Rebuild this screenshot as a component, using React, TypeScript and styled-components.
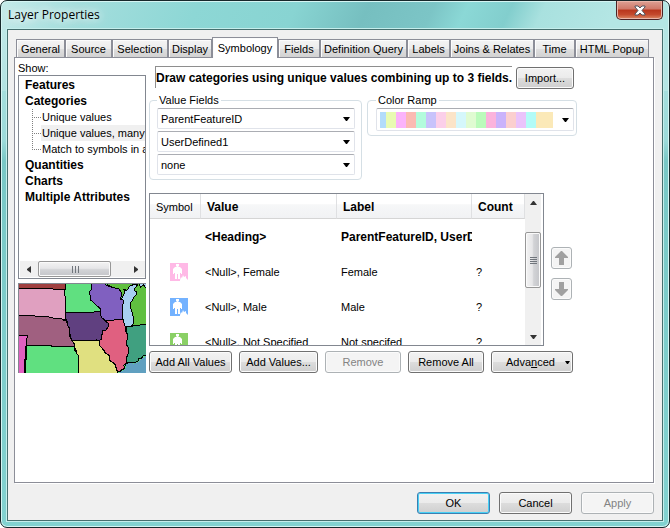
import React from "react";
import styled, { createGlobalStyle, css } from "styled-components";

const GlobalStyle = createGlobalStyle`
  *, *::before, *::after { box-sizing: border-box; }
  html, body, #root { height: 100%; margin: 0; }
  body { background: #fff; }
  body, button, select {
    font-family: "Liberation Sans", Arial, sans-serif;
    font-size: 11px;
    line-height: 16px;
    color: #000;
  }
`;

const heavy = css`
  font-size: 12px;
  font-weight: bold;
`;

const Frame = styled.main`
  display: flex;
  flex-direction: column;
  min-height: 100%;
  padding: 0 6px 6px;
  border: 1px solid #17282b;
  border-radius: 7px;
  box-shadow: inset 0 0 0 1px #d5f5f3;
  background:
    linear-gradient(115deg, #c5eae9 0, #a5dedd 70px, #8dd7d5 180px, #88d4d2 270px, #76bfc0 335px, #7cc5c6 395px, #8bd8d6 425px, #82cecd 465px, #a9e1df 495px, #b4e6e4 560px, #b4e6e4 100%) top / 100% 90px no-repeat,
    linear-gradient(#b4e6e4 0, #9cdad9 140px, #79c8c6 160px, #82d2d0 100%);
`;

const TitleBar = styled.header`
  display: flex;
  justify-content: space-between;
  align-items: flex-start;
  height: 28px;
`;

const Title = styled.h1`
  margin: 0;
  padding: 5px 2px 0 1px;
  font: 12px/18px "Open Sans", "Noto Sans", sans-serif;
  text-shadow: 0 0 8px #fff, 0 0 12px #fff;
`;

const CloseButton = styled.button`
  display: grid;
  place-items: center;
  width: 47px;
  height: 19px;
  padding: 0;
  border: 1px solid #4b2325;
  border-top: 0;
  border-radius: 0 0 5px 5px;
  box-shadow: inset 0 0 0 1px #e9b6aa;
  background: linear-gradient(#dda195 0, #cf7868 45%, #b8351c 50%, #c4492d 75%, #dc8a65 100%);
`;

const Client = styled.div`
  display: flex;
  flex: 1;
  flex-direction: column;
  padding: 7px 8px 6px 6px;
  border: 1px solid #46706f;
  box-shadow: 0 0 0 1px #c5eeec;
  background: #f0f0f0;
`;

const TabStrip = styled.nav`
  display: grid;
  grid-template-columns: 49px 47px 56px 44px 66px 42px 87px 43px 84px 41px 74px;
  align-items: end;
  height: 20px;
  padding-left: 2px;
`;

const Tab = styled.button<{ $active?: boolean }>`
  height: 18px;
  padding: 0;
  border: 1px solid #8c8e98;
  border-bottom: 0;
  background: linear-gradient(#f4f4f4 0, #ececec 50%, #dedede 55%, #d2d2d2 100%);
  box-shadow: inset 1px 1px #fcfcfc;
  white-space: nowrap;
  ${(p) =>
    p.$active &&
    css`
      height: 21px;
      margin-bottom: -1px;
      padding-bottom: 1px;
      background: #fff;
      z-index: 1;
    `}
`;

const Pane = styled.section`
  display: grid;
  flex: 1;
  grid-template-columns: 128px minmax(0, 1fr);
  column-gap: 3px;
  align-items: start;
  padding: 2px 76px 0 3px;
  border: 1px solid #8c8e98;
  box-shadow: 1px 1px #fff;
  background: #fff;
`;

const Sidebar = styled.div`
  display: flex;
  flex-direction: column;
`;

const ShowLabel = styled.span`
  height: 15px;
`;

const Tree = styled.div`
  display: flex;
  flex-direction: column;
  height: 204px;
  padding: 1px 0 1px 1px;
  border: 1px solid #828790;
`;

const TreeList = styled.ul`
  flex: 1;
  margin: 0;
  padding: 0;
  list-style: none;
  overflow: hidden;
`;

const TreeItem = styled.li`
  display: flex;
  height: 16px;
`;

const TreeButton = styled.button<{ $group?: boolean; $selected?: boolean }>`
  flex: 1;
  padding: 0 0 0 1px;
  border: 0;
  background: ${(p) => (p.$selected ? "#f0f0f0" : "transparent")};
  text-align: left;
  white-space: nowrap;
  ${(p) =>
    p.$group &&
    css`
      ${heavy}
      padding-left: 5px;
    `}
`;

const Branch = styled.svg`
  flex: none;
  width: 21px;
  height: 16px;
`;

const HScroll = styled.div`
  display: grid;
  grid-template-columns: 18px 73px 1fr 18px;
  height: 16px;
  background: #f0f0f0;
`;

const ScrollArrow = styled.button`
  display: grid;
  place-items: center;
  padding: 0;
  border: 0;
  background: transparent;
`;

const Thumb = styled.div<{ $vertical?: boolean }>`
  display: grid;
  place-items: center;
  border: 1px solid #979797;
  border-radius: 2px;
  box-shadow: inset 0 0 0 1px #fafafa;
  background: linear-gradient(${(p) => (p.$vertical ? "to right" : "to bottom")}, #f3f3f3 0, #e6e6e8 45%, #d2d3d6 55%, #c4c5c9 100%);
`;

const MapPreview = styled.svg`
  width: 128px;
  height: 90px;
  margin-top: 4px;
  border-top: 1px solid #828790;
  border-left: 1px solid #828790;
`;

const Content = styled.div`
  display: flex;
  flex-direction: column;
  padding-top: 6px;
`;

const Intro = styled.div`
  display: flex;
  gap: 4px;
  padding: 0 3px 0 6px;
`;

const IntroText = styled.p`
  ${heavy}
  flex: 1;
  min-width: 0;
  height: 22px;
  margin: 0;
  padding: 3px 0 0;
  border: solid #8e8e8e;
  border-width: 1px 0 0 1px;
  white-space: nowrap;
`;

const Button = styled.button<{ $primary?: boolean }>`
  display: flex;
  align-items: center;
  justify-content: center;
  height: 22px;
  padding: 0;
  border: 1px solid #707070;
  border-radius: 3px;
  box-shadow: inset 0 0 0 1px ${(p) => (p.$primary ? "#48d0f5" : "#fbfbfb")};
  background: linear-gradient(#f2f2f2 0, #ebebeb 49%, #dddddd 50%, #cfcfcf 100%);
  white-space: nowrap;
  ${(p) => p.$primary && "border-color: #3c7fb1;"}
  &:disabled {
    border-color: #adb2b5;
    background: #f4f4f4;
    color: #838383;
  }
`;

const ImportButton = styled(Button)`
  width: 58px;
  margin-top: 1px;
`;

const Groups = styled.div`
  display: grid;
  grid-template-columns: 213fr 210fr;
  column-gap: 5px;
  align-items: start;
  margin-top: 3px;
`;

const Group = styled.fieldset<{ $ramp?: boolean }>`
  display: flex;
  flex-direction: column;
  min-width: 0;
  margin: 0;
  padding: ${(p) => (p.$ramp ? "0 2px 4px 8px" : "0 6px 4px 7px")};
  border: 1px solid #d5dfe5;
  border-radius: 4px;
`;

const Legend = styled.legend`
  height: 16px;
  padding: 0 2px;
`;

const SelectWrap = styled.div`
  display: grid;
  grid-template-columns: 1fr 12px;
  align-items: center;
  height: 21px;
  margin-bottom: 2px;
  &:last-child { margin-bottom: 0; }
`;

const Select = styled.select`
  grid-area: 1 / 1 / 2 / 3;
  width: 100%;
  height: 21px;
  padding: 0 18px 0 3px;
  appearance: none;
  border: 1px solid #e0e3ea;
  border-top-color: #abadb3;
  border-radius: 2px;
  background: #fff;
`;

const SelectArrow = styled.svg`
  grid-area: 1 / 2;
  width: 7px;
  height: 4px;
  pointer-events: none;
`;

const RampButton = styled.button`
  display: flex;
  align-items: center;
  justify-content: space-between;
  height: 23px;
  padding: 0 4px 0 3px;
  border: 1px solid #e0e3ea;
  border-top-color: #abadb3;
  border-radius: 2px;
  background: #fff;
`;

const Ramp = styled.svg`
  width: 173px;
  height: 16px;
`;

const TableArea = styled.div`
  display: flex;
  align-items: center;
  gap: 7px;
  margin: 13px 5px 0 0;
`;

const ListBox = styled.div`
  display: flex;
  flex: 1;
  min-width: 0;
  height: 153px;
  padding-right: 2px;
  border: 1px solid #828790;
`;

const TableClip = styled.div`
  flex: 1;
  min-width: 0;
  height: 151px;
  overflow: hidden;
`;

const Table = styled.table`
  width: 100%;
  table-layout: fixed;
  border-collapse: separate;
  border-spacing: 0;
`;

const Th = styled.th<{ $heavy?: boolean }>`
  height: 25px;
  padding: 2px 0 0 6px;
  border-right: 1px solid #dfe0e2;
  border-bottom: 1px solid #d5d5d5;
  background: linear-gradient(#fff 0, #fff 40%, #f6f7f8 45%, #f1f2f4 100%);
  font-weight: normal;
  text-align: left;
  ${(p) => p.$heavy && heavy}
`;

const Td = styled.td<{ $heavy?: boolean }>`
  height: 35px;
  padding: 1px 0 0 4px;
  overflow: hidden;
  white-space: nowrap;
  ${(p) => p.$heavy && heavy}
`;

const IconCell = styled(Td)`
  padding-left: 20px;
`;

const Symbol = styled.svg`
  display: block;
  width: 18px;
  height: 18px;
`;

const VScroll = styled.div`
  display: grid;
  grid-template-rows: 38px 56px 1fr 17px;
  width: 16px;
  background: #f0f0f0;
`;

const VArrow = styled(ScrollArrow)`
  height: 18px;
`;

const MoveButtons = styled.div`
  display: grid;
  gap: 9px;
  padding-top: 8px;
`;

const MoveButton = styled(Button)`
  width: 21px;
`;

const Actions = styled.div`
  display: grid;
  grid-template-columns: 83fr 79fr 76fr 76fr 82fr;
  column-gap: 7px;
  margin: 5px 4px 0 0;
`;

const AdvancedButton = styled(Button)`
  justify-content: space-between;
  padding: 0 2px 0 14px;
`;

const Footer = styled.footer`
  display: grid;
  grid-template-columns: repeat(3, 73px);
  gap: 9px;
  justify-content: end;
  margin-top: 9px;
`;

const tabs = [
  "General", "Source", "Selection", "Display", "Symbology", "Fields",
  "Definition Query", "Labels", "Joins & Relates", "Time", "HTML Popup",
];

const tree = [
  { text: "Features", group: true },
  { text: "Categories", group: true },
  { text: "Unique values" },
  { text: "Unique values, many", selected: true },
  { text: "Match to symbols in a", last: true },
  { text: "Quantities", group: true },
  { text: "Charts", group: true },
  { text: "Multiple Attributes", group: true },
];

const rampColors = [
  "#b3dcfb", "#e9fbb3", "#fbb3fb", "#fbbab3", "#b3fbdc", "#c8c3fb", "#fbcfe9", "#fbe4c8",
  "#d5f7fb", "#e0fbd2", "#bbfbbb", "#fbb3dc", "#cab3fb", "#fbcfcf", "#eac3fb", "#b3fbf7", "#fbe9b8",
];

const rows = [
  { name: "Female", label: "Female", color: "#ffb9e6" },
  { name: "Male", label: "Male", color: "#73b2ff" },
  { name: "Not Specified", label: "Not specifed", color: "#8ad065" },
];

const Down = () => (
  <SelectArrow viewBox="0 0 7 4" aria-hidden="true"><path d="M0 0H7L4 4H3Z" /></SelectArrow>
);

const Person = ({ color }: { color: string }) => (
  <Symbol viewBox="0 0 18 18" aria-hidden="true">
    <path fill={color} d="M0 0H18V18H0Z" />
    <path fill="#fff" d="M6 1H9V3L8 4H10L12 6V11H11V7H10V16H8V10H7V16H5V7H4V11H3V6L5 4H7L6 3Z" />
    <path fill="#fff" d="M4 5H11V10H10V16H8V11H7V16H5V10H4Z" />
    <path fill="#fff" d="M10 17L11 14L12 15L13 12L14 14L16 13V15L18 17V18H10Z" />
  </Symbol>
);

const States = () => (
  <MapPreview viewBox="57 192 381 267" preserveAspectRatio="none" role="img" aria-label="Map preview">
    <g stroke="#000" strokeWidth="3" shapeRendering="crispEdges">
      <path fill="#60e080" d="M50 185H445V465H50Z" />
      <path fill="#a04040" d="M50 185H195V207H155L120 206L50 204Z" />
      <path fill="#e0a0c0" d="M50 204L195 208L192 222L197 232V297H187L182 294L165 297L155 292L130 289H115L50 286Z" />
      <path fill="#a06080" d="M50 286L130 289L155 292L163 297L182 294L190 300L200 304L202 315L207 325V340L211 355L216 362L228 380L80 376V346H50Z" />
      <path fill="#e060c0" d="M50 346H82L79 376L72 465H50Z" />
      <path fill="#60e080" d="M80 376L225 380L224 390L231 398L236 407V465H76Z" />
      <path fill="none" strokeWidth="6" d="M79 378V415L74 420V465" />
      <path fill="#604080" d="M197 279L250 278L300 275L304 290L312 300L325 310V320L318 330H307V342L303 348L304 358L298 362L290 360L215 362L211 345L207 335V322L202 315V305L196 295Z" />
      <path fill="#e0e080" d="M215 362L298 362L300 378L309 388L315 398L330 407L328 420L345 433L348 445L353 452L355 465H236V407L228 398V390L224 382V370Z" />
      <path fill="#60c040" d="M310 185H445V320H378L370 240L360 210L340 205Z" />
      <path fill="#8060c0" d="M275 185H308L320 196L340 203L357 207L365 220L362 238L372 235L370 265L368 298L318 302L304 292L300 280V265L285 252L277 244L270 240V225L267 217L275 207Z" />
      <path fill="#a8d0f0" d="M370 240L365 237L374 219L372 209L381 211L389 198L403 193H414L405 204L403 212L410 215V223L400 233L397 243L391 247L392 265L397 280L400 292V310L397 316L383 322L375 319L370 302L368 290V265Z" />
      <path fill="#a8d0f0" d="M414 188H445V205L435 202L431 195L422 201Z" />
      <path fill="#e06080" d="M318 302L368 298L376 320L378 335L382 345L380 375L384 382V402L378 415L380 430L371 435L376 445L365 449L360 455L348 451V440L345 433L330 420L329 407L318 400L315 395L300 378L298 362L304 358L303 348L307 342V332L318 330L325 320V310Z" />
      <path fill="#40a080" d="M378 320H397L402 316L437 314H445V405L432 405L423 416L415 414V422L402 429L385 427L378 434L379 415L384 402V382L380 375L382 345Z" />
      <path fill="#60a0c0" stroke="none" d="M378 434L385 429L402 431L415 425L423 419L438 407V465H350L360 457L376 448Z" />
    </g>
  </MapPreview>
);

export default function App() {
  return (
    <>
      <GlobalStyle />
      <Frame>
        <TitleBar>
          <Title>Layer Properties</Title>
          <CloseButton aria-label="Close">
            <svg width="12" height="11" viewBox="0 0 12 11">
              <path d="M1 1H4L6 3L8 1H11V2L8 5.5L11 9V10H8L6 8L4 10H1V9L4 5.5L1 2Z" fill="#fff" stroke="#50545f" />
            </svg>
          </CloseButton>
        </TitleBar>
        <Client>
          <TabStrip role="tablist">
            {tabs.map((t) => (
              <Tab key={t} role="tab" aria-selected={t === "Symbology"} $active={t === "Symbology"}>{t}</Tab>
            ))}
          </TabStrip>
          <Pane>
            <Sidebar>
              <ShowLabel id="show">Show:</ShowLabel>
              <Tree>
                <TreeList aria-labelledby="show">
                  {tree.map((n) => (
                    <TreeItem key={n.text}>
                      {!n.group && (
                        <Branch viewBox="0 0 21 16" aria-hidden="true">
                          <path d={n.last ? "M12.5 0V9M12 8.5H21" : "M12.5 0V16M12 8.5H21"} fill="none" stroke="#808080" strokeDasharray="1 1" />
                        </Branch>
                      )}
                      <TreeButton $group={n.group} $selected={n.selected}>{n.text}</TreeButton>
                    </TreeItem>
                  ))}
                </TreeList>
                <HScroll>
                  <ScrollArrow aria-label="Scroll left">
                    <svg width="4" height="7" viewBox="0 0 4 7"><path d="M4 0V7L0 4V3Z" fill="#333" /></svg>
                  </ScrollArrow>
                  <Thumb>
                    <svg width="8" height="7" viewBox="0 0 8 7"><path d="M1 0V7M4 0V7M7 0V7" stroke="#70757c" strokeWidth="1" shapeRendering="crispEdges" /></svg>
                  </Thumb>
                  <span />
                  <ScrollArrow aria-label="Scroll right">
                    <svg width="4" height="7" viewBox="0 0 4 7"><path d="M0 0V7L4 4V3Z" fill="#333" /></svg>
                  </ScrollArrow>
                </HScroll>
              </Tree>
              <States />
            </Sidebar>
            <Content>
              <Intro>
                <IntroText>Draw categories using unique values combining up to 3 fields.</IntroText>
                <ImportButton>Import...</ImportButton>
              </Intro>
              <Groups>
                <Group>
                  <Legend>Value Fields</Legend>
                  {["ParentFeatureID", "UserDefined1", "none"].map((v, i) => (
                    <SelectWrap key={v}>
                      <Select aria-label={`Value field ${i + 1}`} defaultValue={v}><option>{v}</option></Select>
                      <Down />
                    </SelectWrap>
                  ))}
                </Group>
                <Group $ramp>
                  <Legend id="ramp">Color Ramp</Legend>
                  <RampButton aria-labelledby="ramp" aria-haspopup="listbox">
                    <Ramp viewBox="0 0 173 16" shapeRendering="crispEdges" aria-hidden="true">
                      {rampColors.map((c, i) => (
                        <rect key={c} x={i ? i * 10 - 4 : 0} width={i === 16 ? 17 : i ? 10 : 6} height="16" fill={c} />
                      ))}
                    </Ramp>
                    <Down />
                  </RampButton>
                </Group>
              </Groups>
              <TableArea>
                <ListBox>
                  <TableClip>
                    <Table>
                      <colgroup>
                        <col width="51" /><col width="136" /><col width="135" /><col />
                      </colgroup>
                      <thead>
                        <tr><Th>Symbol</Th><Th $heavy>Value</Th><Th $heavy>Label</Th><Th $heavy>Count</Th></tr>
                      </thead>
                      <tbody>
                        <tr><Td /><Td $heavy>&lt;Heading&gt;</Td><Td $heavy>ParentFeatureID, UserDefined1</Td><Td /></tr>
                        {rows.map((r) => (
                          <tr key={r.name}>
                            <IconCell><Person color={r.color} /></IconCell>
                            <Td>&lt;Null&gt;, {r.name}</Td>
                            <Td>{r.label}</Td>
                            <Td>?</Td>
                          </tr>
                        ))}
                      </tbody>
                    </Table>
                  </TableClip>
                  <VScroll>
                    <VArrow aria-label="Scroll up">
                      <svg width="7" height="4" viewBox="0 0 7 4"><path d="M0 4H7L4 0H3Z" fill="#333" /></svg>
                    </VArrow>
                    <Thumb $vertical>
                      <svg width="7" height="8" viewBox="0 0 7 8"><path d="M0 1H7M0 3H7M0 5H7M0 7H7" stroke="#70757c" shapeRendering="crispEdges" /></svg>
                    </Thumb>
                    <span />
                    <VArrow aria-label="Scroll down">
                      <svg width="7" height="4" viewBox="0 0 7 4"><path d="M0 0H7L4 4H3Z" fill="#333" /></svg>
                    </VArrow>
                  </VScroll>
                </ListBox>
                <MoveButtons>
                  <MoveButton disabled aria-label="Move up">
                    <svg width="13" height="14" viewBox="0 0 13 14"><path d="M6 0H7L13 6V7H9V14H4V7H0V6Z" fill="#a0a0a0" /></svg>
                  </MoveButton>
                  <MoveButton disabled aria-label="Move down">
                    <svg width="13" height="14" viewBox="0 0 13 14"><path d="M6 14H7L13 8V7H9V0H4V7H0V8Z" fill="#a0a0a0" /></svg>
                  </MoveButton>
                </MoveButtons>
              </TableArea>
              <Actions>
                <Button>Add All Values</Button>
                <Button>Add Values...</Button>
                <Button disabled>Remove</Button>
                <Button>Remove All</Button>
                <AdvancedButton aria-haspopup="menu">
                  <span>Adva<u>n</u>ced</span>
                  <svg width="5" height="3" viewBox="0 0 5 3"><path d="M0 0H5L3 3H2Z" /></svg>
                </AdvancedButton>
              </Actions>
            </Content>
          </Pane>
          <Footer>
            <Button $primary>OK</Button>
            <Button>Cancel</Button>
            <Button disabled>Apply</Button>
          </Footer>
        </Client>
      </Frame>
    </>
  );
}
